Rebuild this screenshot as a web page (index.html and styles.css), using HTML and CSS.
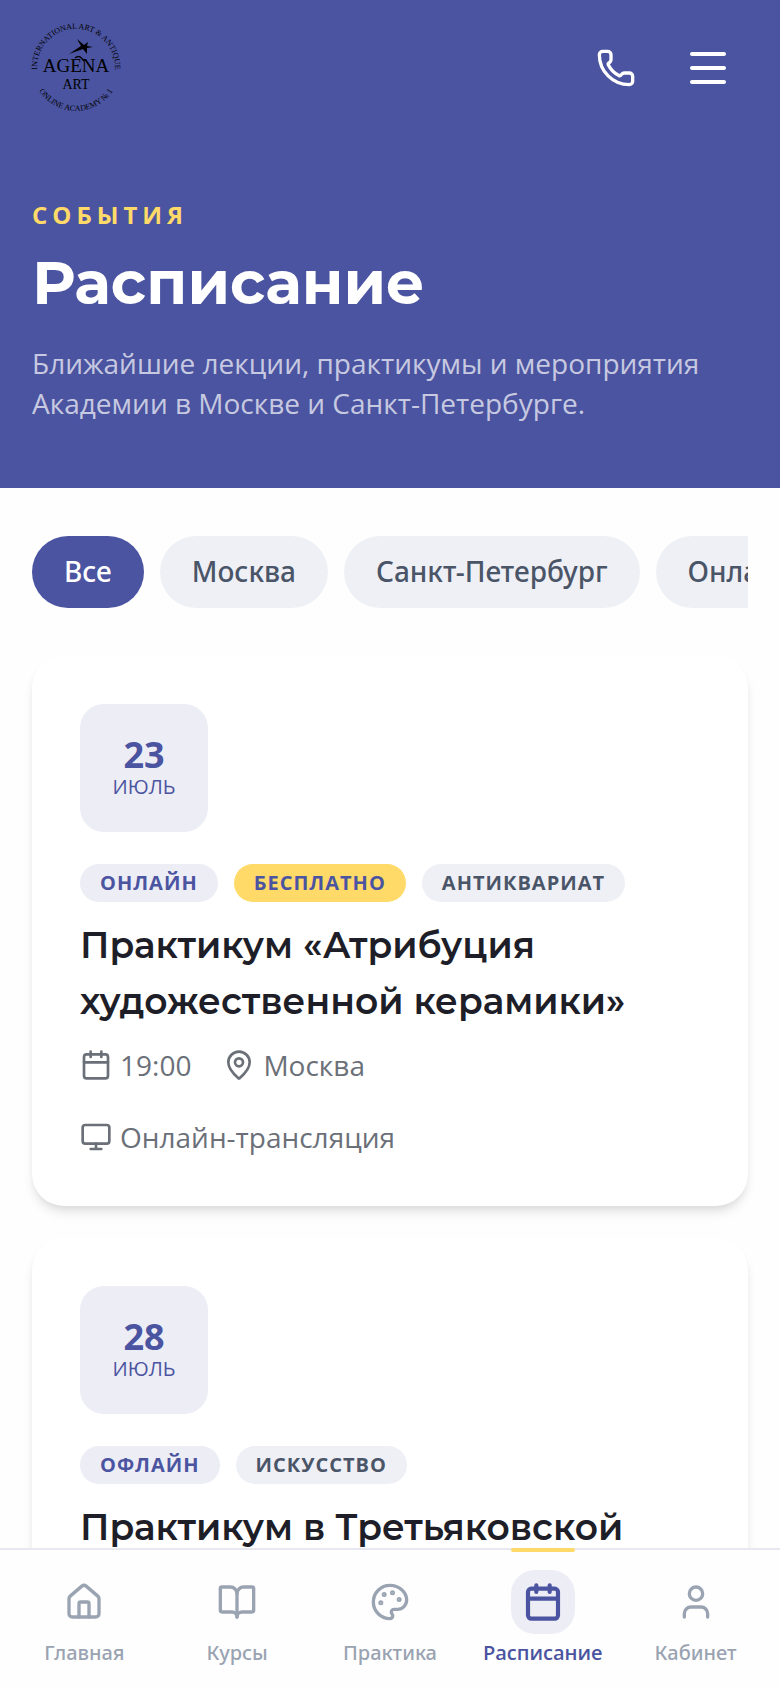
FILE: index.html
```html
<!DOCTYPE html>
<html lang="ru">
<head>
    <meta charset="UTF-8">
    <meta name="viewport" content="width=device-width, initial-scale=1.0">
    <title>Расписание — Agena Art</title>
    <link rel="stylesheet" href="styles.css">
</head>
<body>
    <!-- Шапка -->
    <header class="header">
        <a href="#" class="logo" aria-label="Agena Art">
            <svg viewBox="0 0 88 88" width="88" height="88">
                <defs>
                    <path id="arcTop" d="M5.5 50A39 39 0 1 1 82.5 50"/>
                    <path id="arcBottom" d="M2 56A44 44 0 0 0 86 56"/>
                </defs>
                <text class="logo-ring"><textPath href="#arcTop" startOffset="50%" text-anchor="middle">INTERNATIONAL ART &amp; ANTIQUE</textPath></text>
                <text class="logo-ring"><textPath href="#arcBottom" startOffset="50%" text-anchor="middle">ONLINE ACADEMY № 1</textPath></text>
                <path d="M45 15l7 6 4-3-1 4 6 1-6 1v6l-4-5-14 5 12-8z"/>
                <path d="M43 34c4-3 6-1 9 3" fill="none" stroke="#000" stroke-width="1.5"/>
                <text class="logo-name" x="44" y="48" text-anchor="middle">AGENA</text>
                <text class="logo-art" x="44" y="65" text-anchor="middle">ART</text>
            </svg>
        </a>
        <div class="header-actions">
            <button type="button" class="icon-button" aria-label="Позвонить">
                <svg class="icon icon-lg" viewBox="0 0 24 24"><path d="M13.832 16.568a1 1 0 0 0 1.213-.303l.355-.465A2 2 0 0 1 17 15h3a2 2 0 0 1 2 2v3a2 2 0 0 1-2 2A18 18 0 0 1 2 4a2 2 0 0 1 2-2h3a2 2 0 0 1 2 2v3a2 2 0 0 1-.8 1.6l-.468.351a1 1 0 0 0-.292 1.233 14 14 0 0 0 6.392 6.384"/></svg>
            </button>
            <button type="button" class="icon-button burger" aria-label="Меню">
                <span></span>
                <span></span>
                <span></span>
            </button>
        </div>
    </header>

    <section class="hero">
        <p class="hero-label">СОБЫТИЯ</p>
        <h1>Расписание</h1>
        <p class="hero-text">Ближайшие лекции, практикумы и мероприятия Академии в Москве и Санкт-Петербурге.</p>
    </section>

    <main class="content">
        <!-- Фильтры -->
        <div class="filters">
            <button type="button" class="filter active">Все</button>
            <button type="button" class="filter">Москва</button>
            <button type="button" class="filter">Санкт-Петербург</button>
            <button type="button" class="filter">Онлайн</button>
        </div>

        <!-- Список событий -->
        <div class="events">
            <article class="card">
                <div class="date">
                    <span class="date-day">23</span>
                    <span class="date-month">ИЮЛЬ</span>
                </div>
                <div class="tags">
                    <span class="tag">ОНЛАЙН</span>
                    <span class="tag tag-free">БЕСПЛАТНО</span>
                    <span class="tag tag-topic">АНТИКВАРИАТ</span>
                </div>
                <h2>Практикум «Атрибуция художественной керамики»</h2>
                <div class="meta">
                    <span class="meta-item">
                        <svg class="icon" viewBox="0 0 24 24"><path d="M8 2v4M16 2v4M3 10h18"/><rect x="3" y="4" width="18" height="18" rx="2"/></svg>
                        19:00
                    </span>
                    <span class="meta-item">
                        <svg class="icon" viewBox="0 0 24 24"><path d="M20 10c0 4.993-5.539 10.193-7.399 11.799a1 1 0 0 1-1.202 0C9.539 20.193 4 14.993 4 10a8 8 0 0 1 16 0"/><circle cx="12" cy="10" r="3"/></svg>
                        Москва
                    </span>
                    <span class="meta-item">
                        <svg class="icon" viewBox="0 0 24 24"><rect x="2" y="3" width="20" height="14" rx="2"/><path d="M8 21h8M12 17v4"/></svg>
                        Онлайн-трансляция
                    </span>
                </div>
            </article>

            <article class="card">
                <div class="date">
                    <span class="date-day">28</span>
                    <span class="date-month">ИЮЛЬ</span>
                </div>
                <div class="tags">
                    <span class="tag">ОФЛАЙН</span>
                    <span class="tag tag-topic">ИСКУССТВО</span>
                </div>
                <h2>Практикум в Третьяковской</h2>
            </article>
        </div>
    </main>

    <!-- Нижнее меню -->
    <nav class="bottom-nav">
        <a href="#" class="nav-item">
            <span class="nav-icon"><svg class="icon icon-lg" viewBox="0 0 24 24"><path d="M15 21v-8a1 1 0 0 0-1-1h-4a1 1 0 0 0-1 1v8"/><path d="M3 10a2 2 0 0 1 .709-1.528l7-6a2 2 0 0 1 2.582 0l7 6A2 2 0 0 1 21 10v9a2 2 0 0 1-2 2H5a2 2 0 0 1-2-2z"/></svg></span>
            Главная
        </a>
        <a href="#" class="nav-item">
            <span class="nav-icon"><svg class="icon icon-lg" viewBox="0 0 24 24"><path d="M12 7v14"/><path d="M3 18a1 1 0 0 1-1-1V4a1 1 0 0 1 1-1h5a4 4 0 0 1 4 4 4 4 0 0 1 4-4h5a1 1 0 0 1 1 1v13a1 1 0 0 1-1 1h-6a3 3 0 0 0-3 3 3 3 0 0 0-3-3z"/></svg></span>
            Курсы
        </a>
        <a href="#" class="nav-item">
            <span class="nav-icon"><svg class="icon icon-lg" viewBox="0 0 24 24"><g fill="currentColor"><circle cx="13.5" cy="6.5" r=".5"/><circle cx="17.5" cy="10.5" r=".5"/><circle cx="8.5" cy="7.5" r=".5"/><circle cx="6.5" cy="12.5" r=".5"/></g><path d="M12 2C6.5 2 2 6.5 2 12s4.5 10 10 10c.926 0 1.648-.746 1.648-1.688 0-.437-.18-.835-.437-1.125-.29-.289-.438-.652-.438-1.125a1.64 1.64 0 0 1 1.668-1.668h1.996c3.051 0 5.555-2.503 5.555-5.554C21.965 6.012 17.461 2 12 2z"/></svg></span>
            Практика
        </a>
        <a href="#" class="nav-item active" aria-current="page">
            <span class="nav-icon"><svg class="icon icon-lg" viewBox="0 0 24 24"><path d="M8 2v4M16 2v4M3 10h18"/><rect x="3" y="4" width="18" height="18" rx="2"/></svg></span>
            Расписание
        </a>
        <a href="#" class="nav-item">
            <span class="nav-icon"><svg class="icon icon-lg" viewBox="0 0 24 24"><path d="M19 21v-2a4 4 0 0 0-4-4H9a4 4 0 0 0-4 4v2"/><circle cx="12" cy="7" r="4"/></svg></span>
            Кабинет
        </a>
    </nav>
</body>
</html>
```
FILE: styles.css
```css
* {
    box-sizing: border-box;
}

body {
    margin: 0;
    font-family: "Open Sans", "Noto Sans", sans-serif;
    font-size: 28px;
    line-height: 40px;
    color: #1e1e28;
    background-color: #fefefe;
}

h1, h2, p {
    margin: 0;
}

h1, h2 {
    font-family: Montserrat, Inter, sans-serif;
}

button {
    font: inherit;
    border: none;
    cursor: pointer;
}

.icon {
    width: 32px;
    height: 32px;
    flex-shrink: 0;
    fill: none;
    stroke: currentColor;
    stroke-width: 2;
    stroke-linecap: round;
    stroke-linejoin: round;
}

.icon-lg {
    width: 40px;
    height: 40px;
}

/* Шапка */
.header {
    display: flex;
    justify-content: space-between;
    align-items: center;
    padding: 24px 32px;
    background-color: #4b54a0;
}

.logo svg {
    display: block;
    overflow: visible;
}

.logo-ring, .logo-name, .logo-art {
    font-family: "Liberation Serif", serif;
    fill: #000;
}

.logo-ring {
    font-size: 8px;
}

.logo-name {
    font-size: 19px;
}

.logo-art {
    font-size: 14px;
}

.header-actions {
    display: flex;
    gap: 12px;
}

.icon-button {
    display: flex;
    align-items: center;
    justify-content: center;
    width: 80px;
    height: 80px;
    padding: 0;
    background: none;
    color: #fff;
}

.burger {
    flex-direction: column;
    gap: 10px;
}

.burger span {
    width: 36px;
    height: 4px;
    border-radius: 2px;
    background-color: #fff;
}

/* Заголовок страницы */
.hero {
    padding: 63px 32px 65px;
    background-color: #4b54a0;
}

.hero-label {
    font-size: 24px;
    line-height: 32px;
    font-weight: 700;
    letter-spacing: 5px;
    color: #ffda69;
}

.hero h1 {
    margin: 16px 0 24px;
    font-size: 60px;
    line-height: 72px;
    font-weight: 700;
    color: #fff;
}

.hero-text {
    color: rgba(255, 255, 255, 0.7);
}

.content {
    padding: 48px 32px 64px;
}

/* Фильтры */
.filters {
    display: flex;
    gap: 16px;
    margin-bottom: 48px;
    overflow-x: auto;
    scrollbar-width: none;
}

.filter {
    flex-shrink: 0;
    padding: 15px 32px 17px;
    border-radius: 36px;
    font-family: "Noto Sans", "Open Sans", sans-serif;
    font-weight: 500;
    background-color: #eff0f6;
    color: #4a5568;
}

.filter.active {
    background-color: #4b54a0;
    color: #fff;
}

/* Карточки событий */
.events {
    display: flex;
    flex-direction: column;
    gap: 32px;
}

.card {
    padding: 48px;
    border-radius: 32px;
    background-color: #fff;
    box-shadow: 0 8px 12px -2px rgba(0, 0, 0, 0.1), 0 4px 8px -4px rgba(0, 0, 0, 0.1);
}

.date {
    display: flex;
    flex-direction: column;
    align-items: center;
    justify-content: center;
    width: 128px;
    height: 128px;
    margin-bottom: 32px;
    padding-top: 2px;
    border-radius: 24px;
    background-color: #ededf6;
    color: #4b54a0;
}

.date-day {
    font-size: 36px;
    line-height: 36px;
    font-weight: 700;
}

.date-month {
    font-size: 20px;
    line-height: 28px;
}

.tags {
    display: flex;
    flex-wrap: wrap;
    gap: 16px;
    margin-bottom: 15px;
}

.tag {
    padding: 4px 20px;
    border-radius: 20px;
    font-size: 20px;
    line-height: 30px;
    font-weight: 700;
    letter-spacing: 1px;
    background-color: #ededf6;
    color: #4b54a0;
}

.tag-free {
    background-color: #ffda69;
}

.tag-topic {
    background-color: #eff0f6;
    color: #4a5568;
}

.card h2 {
    font-size: 36px;
    line-height: 56px;
    font-weight: 600;
}

.meta {
    display: flex;
    flex-wrap: wrap;
    gap: 32px;
    margin-top: 16px;
    padding-bottom: 1px;
    color: #6b7078;
}

.meta-item {
    display: flex;
    align-items: center;
    gap: 8px;
}

/* Нижнее меню */
.bottom-nav {
    position: fixed;
    left: 0;
    right: 0;
    bottom: 0;
    display: flex;
    padding: 0 8px;
    border-top: 2px solid #e8e8f0;
    background-color: #fefefe;
}

.nav-item {
    position: relative;
    flex: 1;
    display: flex;
    flex-direction: column;
    align-items: center;
    gap: 5px;
    padding: 20px 0 21px;
    font-family: "Noto Sans", "Open Sans", sans-serif;
    font-size: 20px;
    line-height: 28px;
    font-weight: 500;
    color: #9aa3b2;
    text-decoration: none;
}

.nav-icon {
    display: flex;
    align-items: center;
    justify-content: center;
    width: 64px;
    height: 64px;
    border-radius: 24px;
}

.nav-item.active {
    font-family: "Open Sans", "Noto Sans", sans-serif;
    font-weight: 600;
    color: #4b54a0;
}

.nav-item.active .nav-icon {
    background-color: #ededf6;
}

.nav-item.active .icon {
    stroke-width: 2.5;
}

/* Полоска над активным пунктом */
.nav-item.active::before {
    content: "";
    position: absolute;
    top: -2px;
    width: 64px;
    height: 4px;
    border-radius: 2px;
    background-color: #ffda69;
}
```
